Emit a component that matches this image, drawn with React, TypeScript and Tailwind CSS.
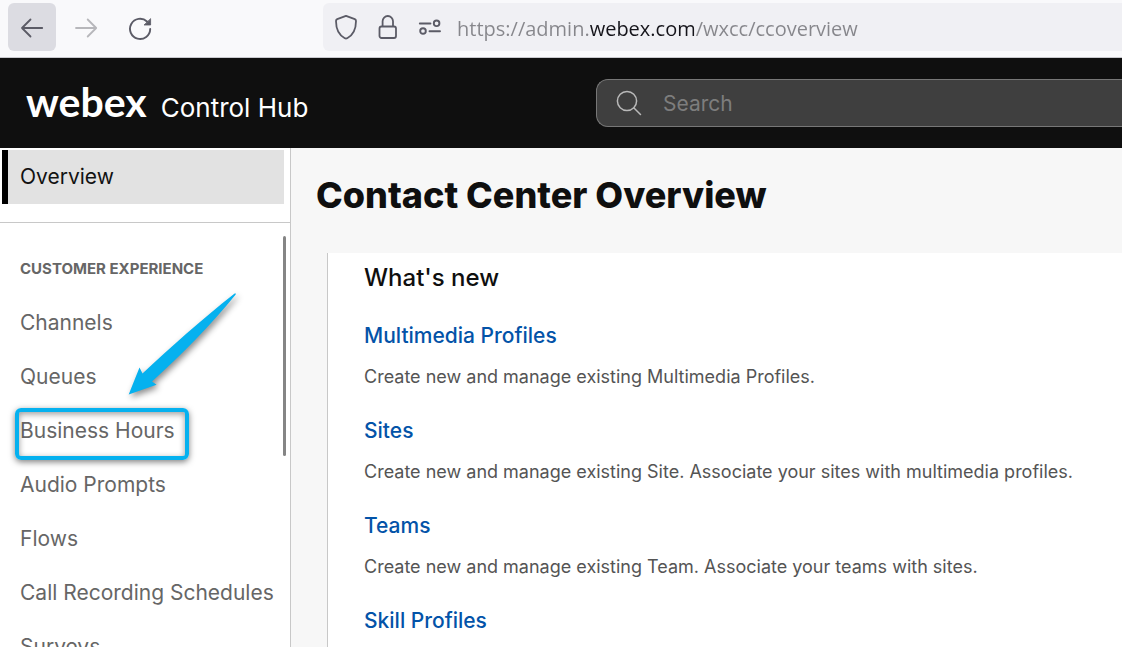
import React from "react";

const navItems = [
  "Channels",
  "Queues",
  "Business Hours",
  "Audio Prompts",
  "Flows",
  "Call Recording Schedules",
  "Surveys",
];

const updates = [
  { title: "Multimedia Profiles", text: "Create new and manage existing Multimedia Profiles." },
  { title: "Sites", text: "Create new and manage existing Site. Associate your sites with multimedia profiles." },
  { title: "Teams", text: "Create new and manage existing Team. Associate your teams with sites." },
  { title: "Skill Profiles" },
];

function BrowserBar() {
  return (
    <div className="flex h-[58px] shrink-0 items-start border-b border-[#c9c9ce] bg-[#f9f9fb] pt-[3px] pl-2 text-[#5b5b66]">
      <div className="flex w-[315px] shrink-0 gap-1.5">
        <button aria-label="Back" className="flex size-12 items-center justify-center rounded-md bg-[#dcdce2]">
          <svg width="24" height="24" viewBox="0 0 24 24" fill="none" stroke="currentColor" strokeWidth="1.8" strokeLinecap="round" strokeLinejoin="round">
            <path d="M22.2 13H2M10.5 4.5L2 13l8.500 8.500" />
          </svg>
        </button>
        <button aria-label="Forward" className="flex size-12 items-center justify-center rounded-md text-[#b7b7bb]">
          <svg width="24" height="24" viewBox="0 0 24 24" fill="none" stroke="currentColor" strokeWidth="1.8" strokeLinecap="round" strokeLinejoin="round">
            <path d="M2 13h20M13.700 4.500L22.200 13l-8.500 8.500" />
          </svg>
        </button>
        <button aria-label="Reload" className="flex size-12 items-center justify-center rounded-md">
          <svg width="24" height="26" viewBox="0 0 24 26" fill="none" stroke="currentColor" strokeWidth="1.9" strokeLinecap="round">
            <path d="M22.200 15a10.100 10.100 0 1 1-3.200-7.500" />
            <path d="M22.600 5v6h-6.200z" fill="currentColor" strokeWidth="0.8" strokeLinejoin="round" />
          </svg>
        </button>
      </div>
      <div className="flex h-12 min-w-0 flex-1 items-center rounded-l-md bg-[#f0f0f4] pl-[11px]">
        <svg className="shrink-0" width="24" height="26" viewBox="0 0 24 26" fill="none" stroke="currentColor" strokeWidth="1.8" strokeLinejoin="round">
          <path d="M12 1.800L20.800 5.200Q22 5.700 22 7C22 15.500 18.300 21.500 13.200 24.200Q12 24.800 10.800 24.200C5.700 21.500 2 15.500 2 7Q2 5.700 3.200 5.200Z" />
        </svg>
        <svg className="ml-[19px] shrink-0" width="22" height="26" viewBox="0 0 22 26" fill="none" stroke="currentColor" strokeWidth="1.8">
          <rect x="2.500" y="12.500" width="16.500" height="11.500" rx="2" />
          <path d="M5.600 12.500V7.200a5.200 5.200 0 0 1 10.400 0v5.300" />
        </svg>
        <svg className="ml-[19px] shrink-0" width="24" height="26" viewBox="0 0 24 26" fill="none" stroke="currentColor" strokeWidth="1.900" strokeLinecap="round">
          <path d="M1.800 9.500H12.500M11.500 17.300H22" />
          <circle cx="18.600" cy="9.300" r="2.800" />
          <circle cx="5" cy="17" r="2.800" />
        </svg>
        <input
          aria-label="Address"
          defaultValue="https://admin.webex.com/wxcc/ccoverview"
          className="mt-0.5 ml-[15px] h-8 min-w-0 flex-1 bg-[linear-gradient(to_right,#86868b_132px,#15141a_132px,#15141a_237px,#86868b_237px)] bg-clip-text font-['Open_Sans',sans-serif] text-xl text-transparent outline-none"
        />
      </div>
    </div>
  );
}

function Header() {
  return (
    <header className="flex h-[90px] shrink-0 items-center bg-[#0f0f0f]">
      <a href="#home" className="flex w-[596px] shrink-0 items-baseline gap-3.5 pb-1 pl-[26px] text-white">
        <span className="font-[Lato,sans-serif] text-[41px] leading-none font-bold">webex</span>
        <span className="text-[26px] leading-none">Control Hub</span>
      </a>
      <label className="flex h-12 min-w-0 flex-1 items-center rounded-l-xl border border-r-0 border-[#777] bg-[#3f3f3f] pl-[19px]">
        <svg className="shrink-0" width="26" height="26" viewBox="0 0 26 26" fill="none" stroke="#b9b9b9" strokeWidth="1.500" strokeLinecap="round">
          <circle cx="11" cy="11" r="9.600" />
          <path d="M18 18l6.500 6.500" />
        </svg>
        <input
          type="search"
          aria-label="Search"
          placeholder="Search"
          className="mt-0.5 ml-[21px] min-w-0 flex-1 bg-transparent text-[21px] text-white outline-none placeholder:text-[#7d7d7d]"
        />
      </label>
    </header>
  );
}

function Sidebar() {
  return (
    <nav className="relative w-[291px] shrink-0 overflow-hidden border-r border-[#c8c8c8] bg-white text-[21px]">
      <div className="border-b border-[#c8c8c8] pt-0.5 pr-1.5 pb-[18px] pl-0.5">
        <a href="#overview" className="flex h-[54px] items-center border-l-6 border-black bg-[#e2e2e2] pl-3 text-[#121212]">
          Overview
        </a>
      </div>
      <div className="pt-[34px] pl-5 text-[#666]">
        <h2 className="mb-[15px] text-[15px] leading-6 font-bold">CUSTOMER EXPERIENCE</h2>
        <ul>
          {navItems.map((item) => (
            <li key={item}>
              <a href="#nav" className="relative flex h-[54px] items-center whitespace-nowrap">
                {item}
                {item === "Business Hours" && (
                  <span className="absolute top-1 -left-[5px] h-[52px] w-[174px] rounded-md border-4 border-[#05b1ef] shadow-[0_2px_6px_rgba(0,0,0,0.5),inset_0_2px_6px_rgba(0,0,0,0.4)]" />
                )}
              </a>
            </li>
          ))}
        </ul>
      </div>
      <div className="absolute top-[88px] right-1 h-[220px] w-[3px] rounded-full bg-[#858585]" />
      <svg className="absolute top-[140px] left-[120px] drop-shadow-[2px_3px_3px_rgba(0,0,0,0.45)]" width="125" height="115" viewBox="120 288 125 115" aria-hidden="true">
        <path d="M128.700 394.500L139.500 367.500L142.500 373.500C170 348 202 319 234 294Q236 292.500 235.700 294.500C210 326 181 355 152 381.500L156.500 384.800Z" fill="#05b1ef" />
      </svg>
    </nav>
  );
}

export default function App() {
  return (
    <div className="flex h-screen flex-col overflow-hidden font-[Inter,sans-serif]">
      <BrowserBar />
      <Header />
      <div className="flex min-h-0 flex-1">
        <Sidebar />
        <main className="flex min-w-0 flex-1 flex-col overflow-hidden bg-[#f7f7f7] text-[#0f0f0f]">
          <h1 className="pt-[23px] pb-[34px] pl-[25px] text-4xl leading-[48px] font-extrabold">Contact Center Overview</h1>
          <section className="ml-9 flex-1 border-l border-[#c8c8c8] bg-white pt-[9px] pl-9">
            <h2 className="mb-6 text-2xl leading-8 font-medium">What's new</h2>
            {updates.map((item) => (
              <article key={item.title} className="h-[95px] pt-1">
                <h3 className="mb-[15px] text-[21px] leading-7 font-medium">
                  <a href="#update" className="text-[#0353a8]">{item.title}</a>
                </h3>
                {item.text && <p className="text-lg leading-6 whitespace-nowrap text-[#545454]">{item.text}</p>}
              </article>
            ))}
          </section>
        </main>
      </div>
    </div>
  );
}
